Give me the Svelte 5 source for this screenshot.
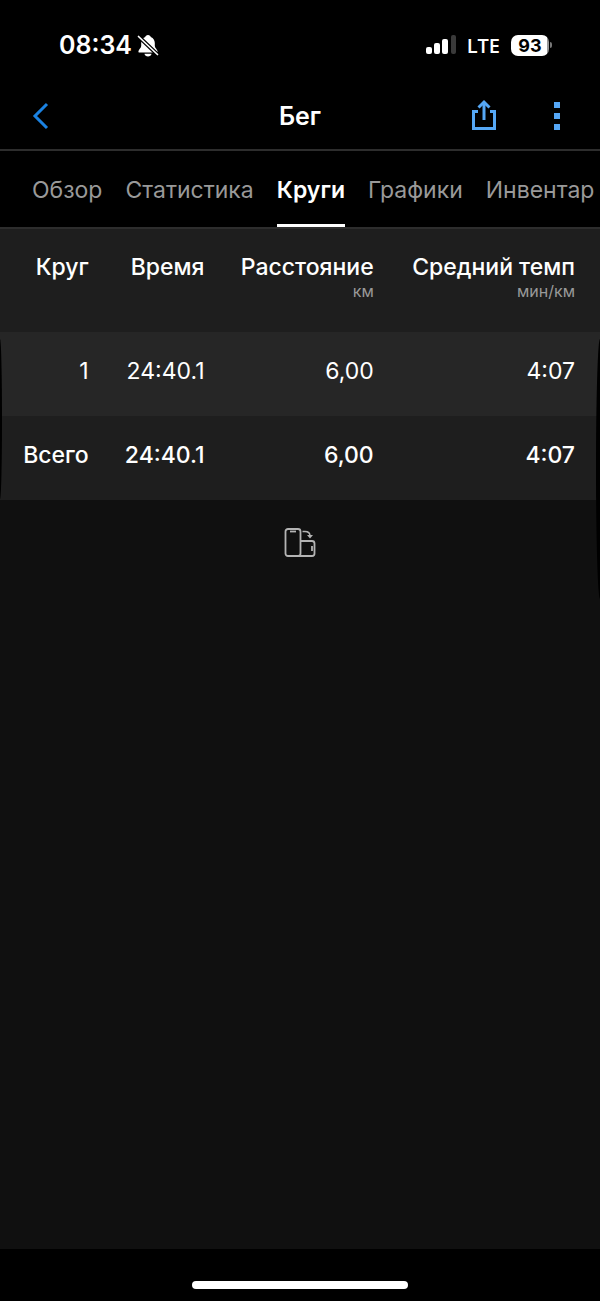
<script>
  const tabs = ["Обзор", "Статистика", "Круги", "Графики", "Инвентар"];
  let active = $state("Круги");

  const columns = [
    { title: "Круг", unit: "" },
    { title: "Время", unit: "" },
    { title: "Расстояние", unit: "км" },
    { title: "Средний темп", unit: "мин/км" },
  ];

  const laps = [["1", "24:40.1", "6,00", "4:07"]];
  const total = ["Всего", "24:40.1", "6,00", "4:07"];
</script>

<div class="app">
  <div class="status">
    <div class="clock">
      <span class="time">08:34</span>
      <svg width="22" height="23" viewBox="0 0 22 23">
        <path
          fill="#fff"
          d="M11 1C9.400 1 8.500 2 8.200 3C5.500 4 4.200 6.500 4.200 9V12C4.200 14 1.400 15.800 1.400 17.400C1.400 18.200 2 18.600 2.800 18.600H19.200C20 18.600 20.600 18.200 20.600 17.400C20.600 15.800 17.800 14 17.800 12V9C17.800 6.500 16.500 4 13.800 3C13.500 2 12.600 1 11 1Z"
        />
        <path fill="#fff" d="M7.500 19.800H14.500C14.200 21.500 12.800 22.500 11 22.500S7.800 21.500 7.500 19.800Z" />
        <path stroke="#000" stroke-width="4" d="M0 1L22 22" />
        <path stroke="#fff" stroke-width="1.700" stroke-linecap="round" d="M1.500 2.500L20.500 20.500" />
      </svg>
    </div>
    <div class="signals">
      <svg width="30" height="20" viewBox="0 0 30 20">
        <rect x="0" y="12" width="6" height="7" rx="2" fill="#fff" />
        <rect x="8" y="8" width="6" height="11" rx="2" fill="#fff" />
        <rect x="16" y="4" width="6" height="15" rx="2" fill="#fff" />
        <rect x="25" y="0" width="5" height="19" rx="2" fill="#3a3a3a" />
      </svg>
      <span class="network">LTE</span>
      <div class="battery">
        <span class="level">93</span>
        <span class="cap"></span>
      </div>
    </div>
  </div>

  <header>
    <button class="icon" aria-label="Назад">
      <svg width="18" height="28" viewBox="0 0 18 28">
        <path fill="none" stroke="#1b82e2" stroke-width="3" d="M16 2L4 14L16 26" />
      </svg>
    </button>
    <h1>Бег</h1>
    <div class="actions">
      <button class="icon" aria-label="Поделиться">
        <svg width="26" height="32" viewBox="0 0 26 32">
          <g fill="none" stroke="#55a7f5" stroke-width="3">
            <path d="M7 11.500H2.500V28.500H23.500V11.500H19" />
            <path d="M13 20V3" />
            <path d="M7.500 7.500L13 2.200L18.500 7.500" />
          </g>
        </svg>
      </button>
      <button class="icon menu" aria-label="Ещё">
        <svg width="6" height="28" viewBox="0 0 6 28">
          <g fill="#55a7f5">
            <rect width="6" height="6" />
            <rect y="11" width="6" height="6" />
            <rect y="22" width="6" height="6" />
          </g>
        </svg>
      </button>
    </div>
  </header>

  <nav>
    {#each tabs as tab}
      <button class="tab" class:active={tab === active} onclick={() => (active = tab)}>
        {tab}
      </button>
    {/each}
  </nav>

  <main>
    <table>
      <thead>
        <tr>
          {#each columns as column}
            <th scope="col">
              {column.title}
              {#if column.unit}
                <span class="unit">{column.unit}</span>
              {/if}
            </th>
          {/each}
        </tr>
      </thead>
      <tbody>
        {#each laps as lap}
          <tr>
            {#each lap as value}
              <td>{value}</td>
            {/each}
          </tr>
        {/each}
      </tbody>
      <tfoot>
        <tr>
          {#each total as value}
            <td>{value}</td>
          {/each}
        </tr>
      </tfoot>
    </table>

    <svg class="rotate" width="32" height="30" viewBox="0 0 32 30">
      <g fill="none" stroke="#b4b4b4" stroke-width="1.800">
        <rect x="1.500" y="1" width="15" height="27" rx="2.500" />
        <path d="M6 3.500H12" />
        <path d="M16 13H28Q30.500 13 30.500 15.500V25.500Q30.500 28 28 28H13" />
        <path d="M28 18V23" />
        <path stroke-width="1.500" d="M18.500 3.500H21Q26 3.500 26 8" />
      </g>
      <path fill="#b4b4b4" d="M23 7H29L26 10.500Z" />
    </svg>
  </main>

  <footer>
    <div class="home"></div>
  </footer>
</div>

<style>
  :global(body) {
    margin: 0;
    background: #000;
  }

  .app {
    display: flex;
    flex-direction: column;
    min-height: 100vh;
    overflow-x: hidden;
    background: #000;
    color: #fff;
    font-family: Inter, "Noto Sans", sans-serif;
  }

  button {
    margin: 0;
    padding: 0;
    border: 0;
    background: none;
    color: inherit;
    font-family: inherit;
    cursor: pointer;
  }

  svg {
    display: block;
  }

  .status {
    display: flex;
    justify-content: space-between;
    align-items: center;
    height: 32px;
    padding: 29px 48px 21px 59px;
  }

  .clock,
  .signals,
  .battery {
    display: flex;
    align-items: center;
  }

  .clock {
    gap: 5px;
  }

  .time {
    font-size: 25px;
    font-weight: 600;
  }

  .signals {
    gap: 11px;
  }

  .network {
    font-family: "Open Sans", "Noto Sans", sans-serif;
    font-size: 20px;
    font-weight: 600;
  }

  .battery {
    gap: 1px;
  }

  .level {
    width: 38px;
    border-radius: 7px;
    background: linear-gradient(to right, #fff 95%, #999 95%);
    color: #000;
    font-size: 18px;
    font-weight: 700;
    line-height: 21px;
    text-align: center;
  }

  .cap {
    width: 2px;
    height: 6px;
    border-radius: 0 2px 2px 0;
    background: #777;
  }

  header {
    display: grid;
    grid-template-columns: 1fr auto 1fr;
    align-items: center;
    height: 67px;
    padding: 0 31px;
    border-bottom: 2px solid #2d2d2d;
  }

  h1 {
    margin: 0;
    font-size: 25px;
    font-weight: 600;
  }

  .icon {
    display: flex;
    justify-self: start;
  }

  .actions {
    display: flex;
    justify-content: flex-end;
    align-items: center;
    gap: 57px;
  }

  .menu {
    padding-right: 9px;
  }

  nav {
    display: flex;
    gap: 23px;
    height: 76px;
    padding-left: 32px;
    border-bottom: 2px solid #2d2d2d;
    overflow: hidden;
  }

  .tab {
    flex: none;
    padding-top: 4px;
    border-bottom: 3px solid transparent;
    color: #999;
    font-size: 23px;
  }

  .tab.active {
    border-color: #fff;
    color: #fff;
    font-weight: 600;
  }

  main {
    position: relative;
    flex: 1;
    background: #101010;
  }

  /* dark curved edges of the display */
  main::before,
  main::after {
    content: "";
    position: absolute;
    top: 110px;
    background: #000;
  }

  main::before {
    left: 0;
    width: 2px;
    height: 160px;
    border-radius: 0 100% 100% 0 / 0 50% 50% 0;
  }

  main::after {
    right: 0;
    width: 4px;
    height: 260px;
    border-radius: 100% 0 0 100% / 50% 0 0 50%;
  }

  table {
    width: 100%;
    border-collapse: collapse;
    background: #1e1e1e;
    font-size: 23px;
    line-height: 28px;
    text-align: right;
    white-space: nowrap;
  }

  th,
  td {
    padding: 0 0 0 36px;
  }

  th:first-child,
  td:first-child {
    padding-left: 23px;
  }

  th:last-child,
  td:last-child {
    padding-left: 38px;
    padding-right: 25px;
  }

  th {
    height: 79px;
    padding-top: 24px;
    font-weight: 500;
    text-align: right;
    vertical-align: top;
  }

  td {
    box-sizing: border-box;
    height: 84px;
    padding-bottom: 6px;
  }

  tbody tr {
    background: #262626;
  }

  tfoot {
    font-weight: 500;
  }

  .unit {
    display: block;
    color: #999;
    font-size: 16px;
    font-weight: 400;
    line-height: 20px;
  }

  .rotate {
    margin: 28px auto 0;
  }

  footer {
    display: flex;
    justify-content: center;
    align-items: flex-end;
    height: 52px;
  }

  .home {
    width: 36%;
    height: 8px;
    margin-bottom: 12px;
    border-radius: 4px;
    background: #fff;
  }
</style>
